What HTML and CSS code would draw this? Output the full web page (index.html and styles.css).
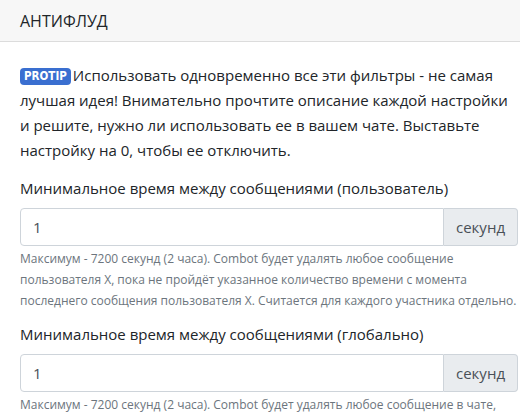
FILE: index.html
```html
<!DOCTYPE html>
<html lang="ru">
<head>
    <meta charset="UTF-8">
    <meta name="viewport" content="width=device-width, initial-scale=1.0">
    <title>Антифлуд</title>
    <link rel="stylesheet" href="styles.css">
</head>
<body>

    <div class="card">
        <div class="card-header">АНТИФЛУД</div>
        <div class="card-body">
            <p class="intro"><span class="badge">PROTIP</span>Использовать одновременно все эти фильтры - не самая лучшая идея! Внимательно прочтите описание каждой настройки и решите, нужно ли использовать ее в вашем чате. Выставьте настройку на 0, чтобы ее отключить.</p>

            <div class="field">
                <label for="user-delay">Минимальное время между сообщениями (пользователь)</label>
                <div class="input-group">
                    <input id="user-delay" type="text" value="1">
                    <span class="addon">секунд</span>
                </div>
                <small>Максимум - 7200 секунд (2 часа). Combot будет удалять любое сообщение пользователя X, пока не пройдёт указанное количество времени с момента последнего сообщения пользователя X. Считается для каждого участника отдельно.</small>
            </div>

            <div class="field">
                <label for="global-delay">Минимальное время между сообщениями (глобально)</label>
                <div class="input-group">
                    <input id="global-delay" type="text" value="1">
                    <span class="addon">секунд</span>
                </div>
                <small>Максимум - 7200 секунд (2 часа). Combot будет удалять любое сообщение в чате, пока не пройдёт указанное количество времени с момента последнего сообщения в чате.</small>
            </div>
        </div>
    </div>

</body>
</html>
```

FILE: styles.css
```css
body {
    font-family: 'Open Sans', 'Noto Sans', sans-serif;
    color: #212529;
    background-color: #ffffff;
    margin: 0;
    padding: 0;
    overflow: hidden;
}

.card {
    width: 540px;
    margin-left: -1px;
    border: 1px solid rgba(0, 0, 0, 0.125);
    border-top: none;
}

.card-header {
    background-color: #f7f7f7;
    border-bottom: 1px solid #dcdcdc;
    height: 42px;
    box-sizing: border-box;
    padding: 10px 20px 0;
    font-size: 16px;
}

.card-body {
    padding: 21px 0 0 20px;
}

.intro {
    margin: 0 0 13px;
    font-size: 15px;
    line-height: 25px;
    width: 492px;
}

.badge {
    display: inline-block;
    background-color: #3a6fd0;
    color: #ffffff;
    font-family: 'DejaVu Sans Condensed', 'DejaVu Sans', sans-serif;
    font-weight: bold;
    font-size: 11.5px;
    line-height: 17px;
    padding: 0 4px;
    margin-right: 2px;
    border-radius: 4px;
    vertical-align: 1px;
}

.field {
    margin-bottom: 11px;
}

.field label {
    display: block;
    font-size: 15px;
    line-height: 24px;
    margin-bottom: 8px;
}

.input-group {
    display: flex;
    width: 498px;
    height: 38px;
}

.input-group input {
    flex: 1;
    min-width: 0;
    font-family: inherit;
    font-size: 15px;
    color: #495057;
    padding: 0 12px;
    border: 1px solid #ced4da;
    border-radius: 4px 0 0 4px;
    outline: none;
}

.addon {
    display: flex;
    align-items: center;
    padding: 0 12px;
    font-size: 15px;
    color: #495057;
    background-color: #e9ecef;
    border: 1px solid #ced4da;
    border-left: none;
    border-radius: 0 4px 4px 0;
}

.field small {
    display: block;
    width: 500px;
    margin-top: 2px;
    font-size: 12px;
    line-height: 21px;
    color: #6c757d;
}
```
